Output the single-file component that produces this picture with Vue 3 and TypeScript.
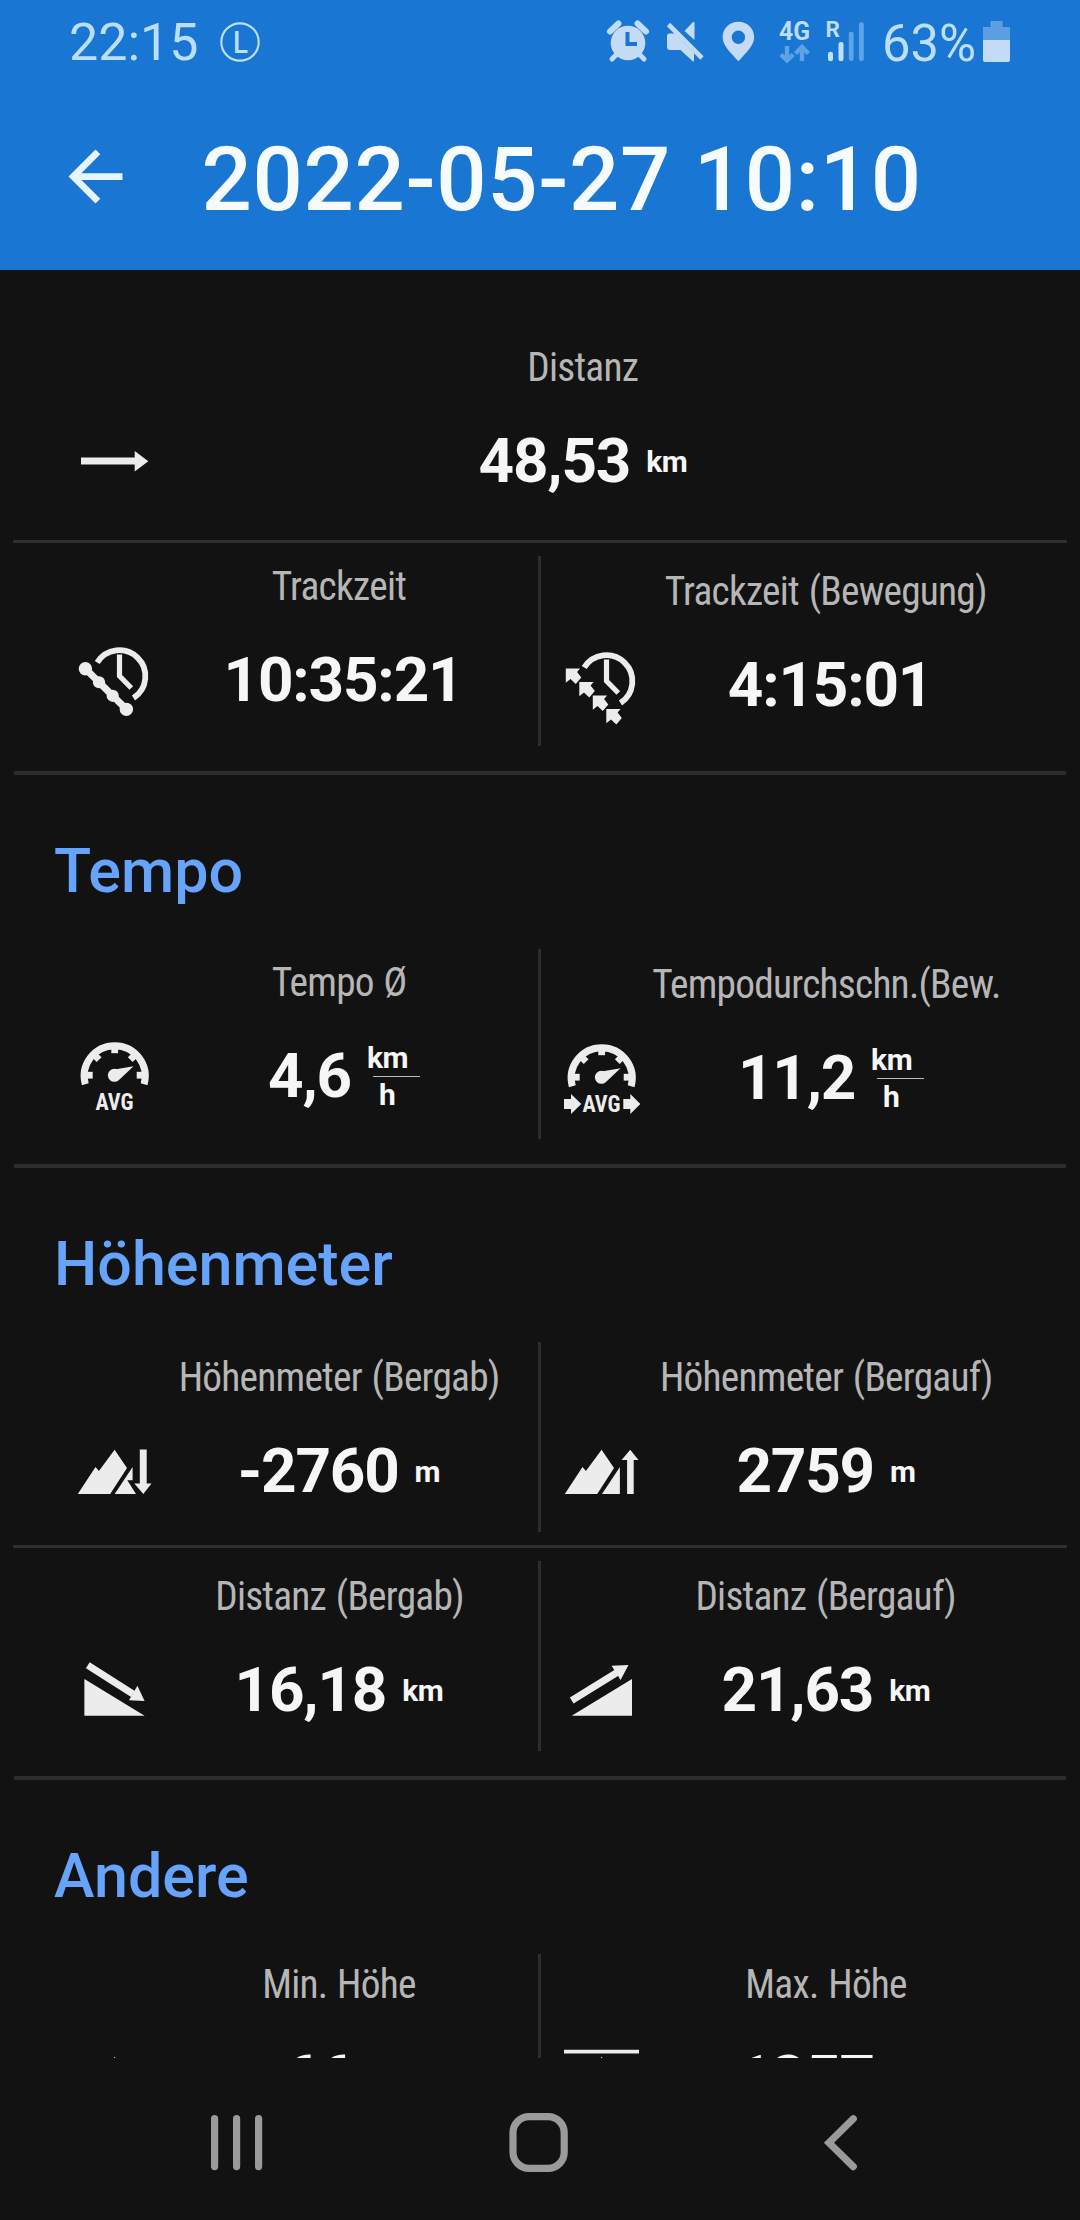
<script setup lang="ts">
type IconName =
  | 'distance' | 'trackTime' | 'moveTime' | 'avg' | 'avgMove'
  | 'down' | 'up' | 'slopeDown' | 'slopeUp' | 'minAlt' | 'maxAlt'

interface Stat {
  label: string
  value: string
  icon: IconName
  unit?: string
  per?: string
  top: number
}

interface Section {
  title?: string
  rows: Stat[][]
}

const sections: Section[] = [
  {
    rows: [
      [{ label: 'Distanz', value: '48,53', unit: 'km', icon: 'distance', top: 73 }],
      [
        { label: 'Trackzeit', value: '10:35:21', icon: 'trackTime', top: 19 },
        { label: 'Trackzeit (Bewegung)', value: '4:15:01', icon: 'moveTime', top: 24 },
      ],
    ],
  },
  {
    title: 'Tempo',
    rows: [
      [
        { label: 'Tempo Ø', value: '4,6', unit: 'km', per: 'h', icon: 'avg', top: 22 },
        { label: 'Tempodurchschn.(Bew.', value: '11,2', unit: 'km', per: 'h', icon: 'avgMove', top: 24 },
      ],
    ],
  },
  {
    title: 'Höhenmeter',
    rows: [
      [
        { label: 'Höhenmeter (Bergab)', value: '-2760', unit: 'm', icon: 'down', top: 24 },
        { label: 'Höhenmeter (Bergauf)', value: '2759', unit: 'm', icon: 'up', top: 24 },
      ],
      [
        { label: 'Distanz (Bergab)', value: '16,18', unit: 'km', icon: 'slopeDown', top: 24 },
        { label: 'Distanz (Bergauf)', value: '21,63', unit: 'km', icon: 'slopeUp', top: 24 },
      ],
    ],
  },
  {
    title: 'Andere',
    rows: [
      [
        { label: 'Min. Höhe', value: '66', unit: 'm', icon: 'minAlt', top: 19 },
        { label: 'Max. Höhe', value: '1357', unit: 'm', icon: 'maxAlt', top: 19 },
      ],
    ],
  },
]

const steps = [0, 1, 2, 3]
</script>

<template>
  <div class="screen">
    <header class="top">
      <div class="status">
        <span class="clock">22:15</span>
        <svg class="l-badge" width="40" height="40" viewBox="0 0 40 40">
          <circle cx="20" cy="20" r="18.7" fill="none" stroke="currentColor" stroke-width="2.2" />
          <text x="20.5" y="30.7" text-anchor="middle" font-size="32" font-weight="500" fill="currentColor" textLength="15" lengthAdjust="spacingAndGlyphs">L</text>
        </svg>
        <svg class="icons" width="410" height="46" viewBox="604 20 410 46">
          <g fill="#c3dbf4">
            <circle cx="628" cy="43" r="17.3" />
            <path d="M611 32l8.500-8" stroke="#c3dbf4" stroke-width="6" stroke-linecap="round" transform="translate(-1 -.5)" />
            <path d="M646 31.500l-8.500-8" stroke="#c3dbf4" stroke-width="6" stroke-linecap="round" />
            <path d="M616 55l-4 4M640 55l4 4" stroke="#c3dbf4" stroke-width="5" stroke-linecap="round" />
            <path d="M627.500 32v12h9.500" fill="none" stroke="#1976d2" stroke-width="4" />
            <path d="M667 36q0-2.500 2.500-2.500h5.500L694 53v8.500l-1 0L680.500 50H670q-3 0-3-3z" />
            <path d="M684.500 31l8.500-9q1.500-.5 1.500 1v17z" />
            <path d="M668.500 24.500L702 58" stroke="#c3dbf4" stroke-width="4.600" />
            <path fill-rule="evenodd" d="M738.400 21.700c8.800 0 15.800 6.600 15.800 15.500 0 8.300-8.300 15.600-15.800 24-7.500-8.400-15.800-15.700-15.800-24 0-8.900 7-15.500 15.800-15.500zm0 8.800a6.700 6.700 0 1 0 0 13.400 6.700 6.700 0 0 0 0-13.400z" />
          </g>
          <text x="779" y="39.500" font-size="25" font-weight="700" fill="#bbdefb" textLength="31" lengthAdjust="spacingAndGlyphs">4G</text>
          <g fill="none" stroke="#5ca3e8" stroke-width="4.400">
            <path d="M787 46v14M780.800 54.500l6.200 6 6.200-6M802 61V47.500M795.600 53.500l6.400-6.500 6.400 6.500" />
          </g>
          <text x="825.500" y="36.800" font-size="22.500" font-weight="700" fill="#bbdefb">R</text>
          <rect x="828" y="51.700" width="5" height="9.600" rx="2.300" fill="#bfdffb" />
          <rect x="838.500" y="42" width="5" height="19.300" rx="2.300" fill="#bfdffb" />
          <rect x="848.800" y="31.700" width="4.800" height="29.300" rx="2" fill="#5ca3e8" />
          <rect x="859" y="22.300" width="4.800" height="38.700" rx="2" fill="#5ca3e8" />
          <text x="882" y="61.300" font-size="52" fill="#bbdefb" textLength="94" lengthAdjust="spacingAndGlyphs">63%</text>
          <path d="M990.500 21h12v6h7.500v14h-27V27h7.500z" fill="#5b9fe2" />
          <path d="M983 40h27v20q0 2-2 2h-23q-2 0-2-2z" fill="#c3dbf4" />
        </svg>
      </div>
      <div class="bar">
        <svg width="81" height="81" viewBox="0 0 24 24"><path d="M20 11H7.830l5.590-5.590L12 4l-8 8 8 8 1.410-1.410L7.830 13H20z" fill="#e6f5ff" /></svg>
        <h1>2022-05-27 10:10</h1>
      </div>
    </header>

    <main class="content">
      <section v-for="(section, si) in sections" :key="si">
        <h2 v-if="section.title">{{ section.title }}</h2>
        <template v-for="(row, ri) in section.rows" :key="ri">
          <hr v-if="ri > 0" class="inner" />
          <div class="row" :class="{ single: row.length === 1, last: ri === section.rows.length - 1 }">
            <template v-for="(stat, ci) in row" :key="stat.label">
              <i v-if="ci > 0" class="split"></i>
              <div class="cell" :style="{ paddingTop: stat.top + 'px' }">
                <svg class="glyph" width="84" height="84" viewBox="-42 -42 84 84" fill="#ececec">
                  <path v-if="stat.icon === 'distance'" d="M-34-3.500h53.700V-10L33.300.2 19.700 10.500V3.500H-34z" />
                  <g v-else-if="stat.icon === 'trackTime' || stat.icon === 'moveTime'">
                    <path d="M-17.800-17.400A26 26 0 1 1 18.500 18" fill="none" stroke="#ececec" stroke-width="5.800" />
                    <path d="M4.500-25.500V-4L16.300 8" fill="none" stroke="#ececec" stroke-width="5.200" />
                    <g v-if="stat.icon === 'trackTime'">
                      <path d="M-29.600-11.300l41 40.600" stroke="#ececec" stroke-width="7" />
                      <circle v-for="n in steps" :key="n" :cx="-29.6 + n * 13.65" :cy="-11.3 + n * 13.55" :r="n % 3 ? 6.1 : 6.7" />
                    </g>
                    <g v-else>
                      <path v-for="n in steps" :key="n" :transform="`translate(${-36.2 + n * 13.5} ${-16.4 + n * 13.5})`" d="M0 0h14.300l-3 3.500L15.500 9 10 15.300 4.700 10.500 0 14.200z" />
                    </g>
                  </g>
                  <g v-else-if="stat.icon === 'avg' || stat.icon === 'avgMove'">
                    <path d="M-29.700 8.300A30.500 30.500 0 1 1 29.100 8.300" fill="none" stroke="#ececec" stroke-width="7" />
                    <rect v-for="a in [-90, -45, 0, 45, 90]" :key="a" x="-3.400" y="-31" width="6.800" height="9" :transform="`translate(-.3 -.8) rotate(${a})`" />
                    <circle cx="-.6" cy="-.7" r="6.500" />
                    <path d="M1-6.700L18.500-9.800 4.500 3.500z" />
                    <text class="avg" x="-.6" y="33.500" text-anchor="middle" textLength="38" lengthAdjust="spacingAndGlyphs">AVG</text>
                    <path v-if="stat.icon === 'avgMove'" d="M-38 21h7v-5l10.300 10L-31 36v-5h-7zM21.300 21h7v-5l10.100 10-10.100 10v-5h-7z" />
                  </g>
                  <g v-else-if="stat.icon === 'down' || stat.icon === 'up' || stat.icon === 'minAlt' || stat.icon === 'maxAlt'">
                    <path d="M-37.200 22.900l17.700-27 3.400 4L-.4-21.200 12-3-4.800 22.900z" />
                    <g v-if="stat.icon === 'down'">
                      <path d="M-.3 22.900L17.600-4V9.200H12.300L21 22.900z" />
                      <path d="M24.800-21.500h6.900v34h4.800L28.300 22.900 19.300 12.500h5.500z" />
                    </g>
                    <path v-else d="M0 22.900L17.900-4v26.900z" />
                    <path v-if="stat.icon === 'up'" d="M25.100 22.900V-11h-5.500l8.600-10.200L36.500-11h-4.800v33.900z" />
                    <path v-if="stat.icon === 'maxAlt'" d="M-38-28.300h75v3.700h-75z" />
                  </g>
                  <g v-else-if="stat.icon === 'slopeDown'">
                    <path d="M-30.600-11v36.700h60.200z" />
                    <path d="M-27.200-24.800L18 4" stroke="#ececec" stroke-width="7" />
                    <path d="M29.600 11L22.400-4.300 14 10.300z" />
                  </g>
                  <g v-else>
                    <path d="M-30.300 25.700L30-11v36.700z" />
                    <path d="M-30.300 10.400L15-17.500" stroke="#ececec" stroke-width="7" />
                    <path d="M26.500-25L9.600-24.300 18.600-10z" />
                  </g>
                </svg>
                <div class="text">
                  <div class="label"><span>{{ stat.label }}</span></div>
                  <div class="value" :class="{ bare: !stat.unit }">
                    <span>{{ stat.value }}</span>
                    <span v-if="stat.per" class="fraction"><b>{{ stat.unit }}</b><i></i><b class="h">{{ stat.per }}</b></span>
                    <span v-else-if="stat.unit" class="unit">{{ stat.unit }}</span>
                  </div>
                </div>
              </div>
            </template>
          </div>
        </template>
        <hr />
      </section>
    </main>

    <nav>
      <svg width="1080" height="162" viewBox="0 2058 1080 162" fill="none" stroke="#9a9a9a" stroke-width="7.200" stroke-linecap="round">
        <path d="M214.600 2118.600v48M236.600 2118.600v48M258.600 2118.600v48" />
        <rect x="513" y="2116.700" width="51.200" height="51.600" rx="16" />
        <path d="M853.300 2118.800l-24.300 23.900 24.300 23.900" />
      </svg>
    </nav>
  </div>
</template>

<style>
body {
  margin: 0;
  background: #121212;
}
</style>

<style scoped>
.screen {
  width: 1080px;
  height: 2220px;
  overflow: hidden;
  background: #121212;
  font-family: Roboto, "Liberation Sans", sans-serif;
  display: flex;
  flex-direction: column;
}
.top {
  height: 270px;
  flex: none;
  background: #1976d2;
  color: #bbdefb;
}
.status {
  height: 86px;
  display: flex;
  align-items: center;
  padding-left: 69px;
  box-sizing: border-box;
}
.clock {
  width: 151px;
  font-size: 52px;
  line-height: 60px;
}
.l-badge {
  margin-top: -2px;
}
.l-badge,
.icons {
  overflow: visible;
}
.icons {
  margin-left: 344px;
}
.bar {
  display: flex;
  align-items: center;
  height: 180px;
  padding-left: 54.5px;
}
h1 {
  margin: 8px 0 0 66px;
  font-size: 88.6px;
  line-height: 104px;
  font-weight: 500;
  letter-spacing: 0.65px;
  color: #f5fbff;
  white-space: nowrap;
}
.content {
  height: 1788px;
  flex: none;
  overflow: hidden;
}
h2 {
  box-sizing: border-box;
  height: 161px;
  margin: 0;
  padding: 60px 0 0 54px;
  font-size: 61px;
  line-height: 72px;
  font-weight: 500;
  color: #66a3fb;
}
hr {
  height: 4px;
  margin: 0 14px;
  border: 0;
  background: #2c2c2c;
}
hr.inner {
  height: 3px;
  margin: 0 13px;
  background: #2f2f2f;
}
.row {
  display: flex;
  height: 216px;
  padding-left: 54px;
}
.row.last {
  height: 228px;
}
.row.single {
  height: 270px;
}
.cell {
  box-sizing: border-box;
  width: 484px;
  display: flex;
  align-items: flex-start;
}
.single .cell {
  width: 972px;
}
.split {
  width: 3px;
  height: 190px;
  margin-top: 13px;
  background: #2d2d2d;
}
.glyph {
  flex: none;
  margin: 76px 0 0 19px;
  overflow: visible;
}
.avg {
  font-family: "Roboto Condensed", Roboto, sans-serif;
  font-size: 23px;
  font-weight: 700;
}
.text {
  flex: none;
  width: 364px;
}
.single .text {
  width: 852px;
}
.label {
  display: flex;
  justify-content: center;
  font-family: "Roboto Condensed", Roboto, sans-serif;
  font-stretch: 75%;
  font-size: 41px;
  line-height: 48px;
  letter-spacing: -0.8px;
  word-spacing: 1.5px;
  color: #b6b6b6;
  white-space: nowrap;
}
.label span {
  transform: scaleX(0.96);
}
.value {
  display: flex;
  justify-content: center;
  align-items: center;
  height: 90px;
  margin-top: 25px;
  gap: 16px;
  font-size: 62px;
  line-height: 72px;
  font-weight: 700;
  letter-spacing: -1.2px;
  color: #f6f6f6;
}
.value.bare {
  padding-left: 8px;
}
.unit,
.fraction {
  font-size: 30px;
  line-height: 36px;
  letter-spacing: -0.4px;
}
.unit {
  margin-top: 1px;
}
.fraction {
  display: flex;
  flex-direction: column;
  width: 43px;
  margin-top: 1px;
}
.fraction b {
  font-weight: 700;
}
.fraction i {
  width: 47px;
  height: 1.5px;
  margin: 0 0 0 6px;
  background: #bdbdbd;
}
.fraction b.h {
  margin-left: 12px;
}
nav {
  height: 162px;
}
nav svg {
  display: block;
}
</style>
